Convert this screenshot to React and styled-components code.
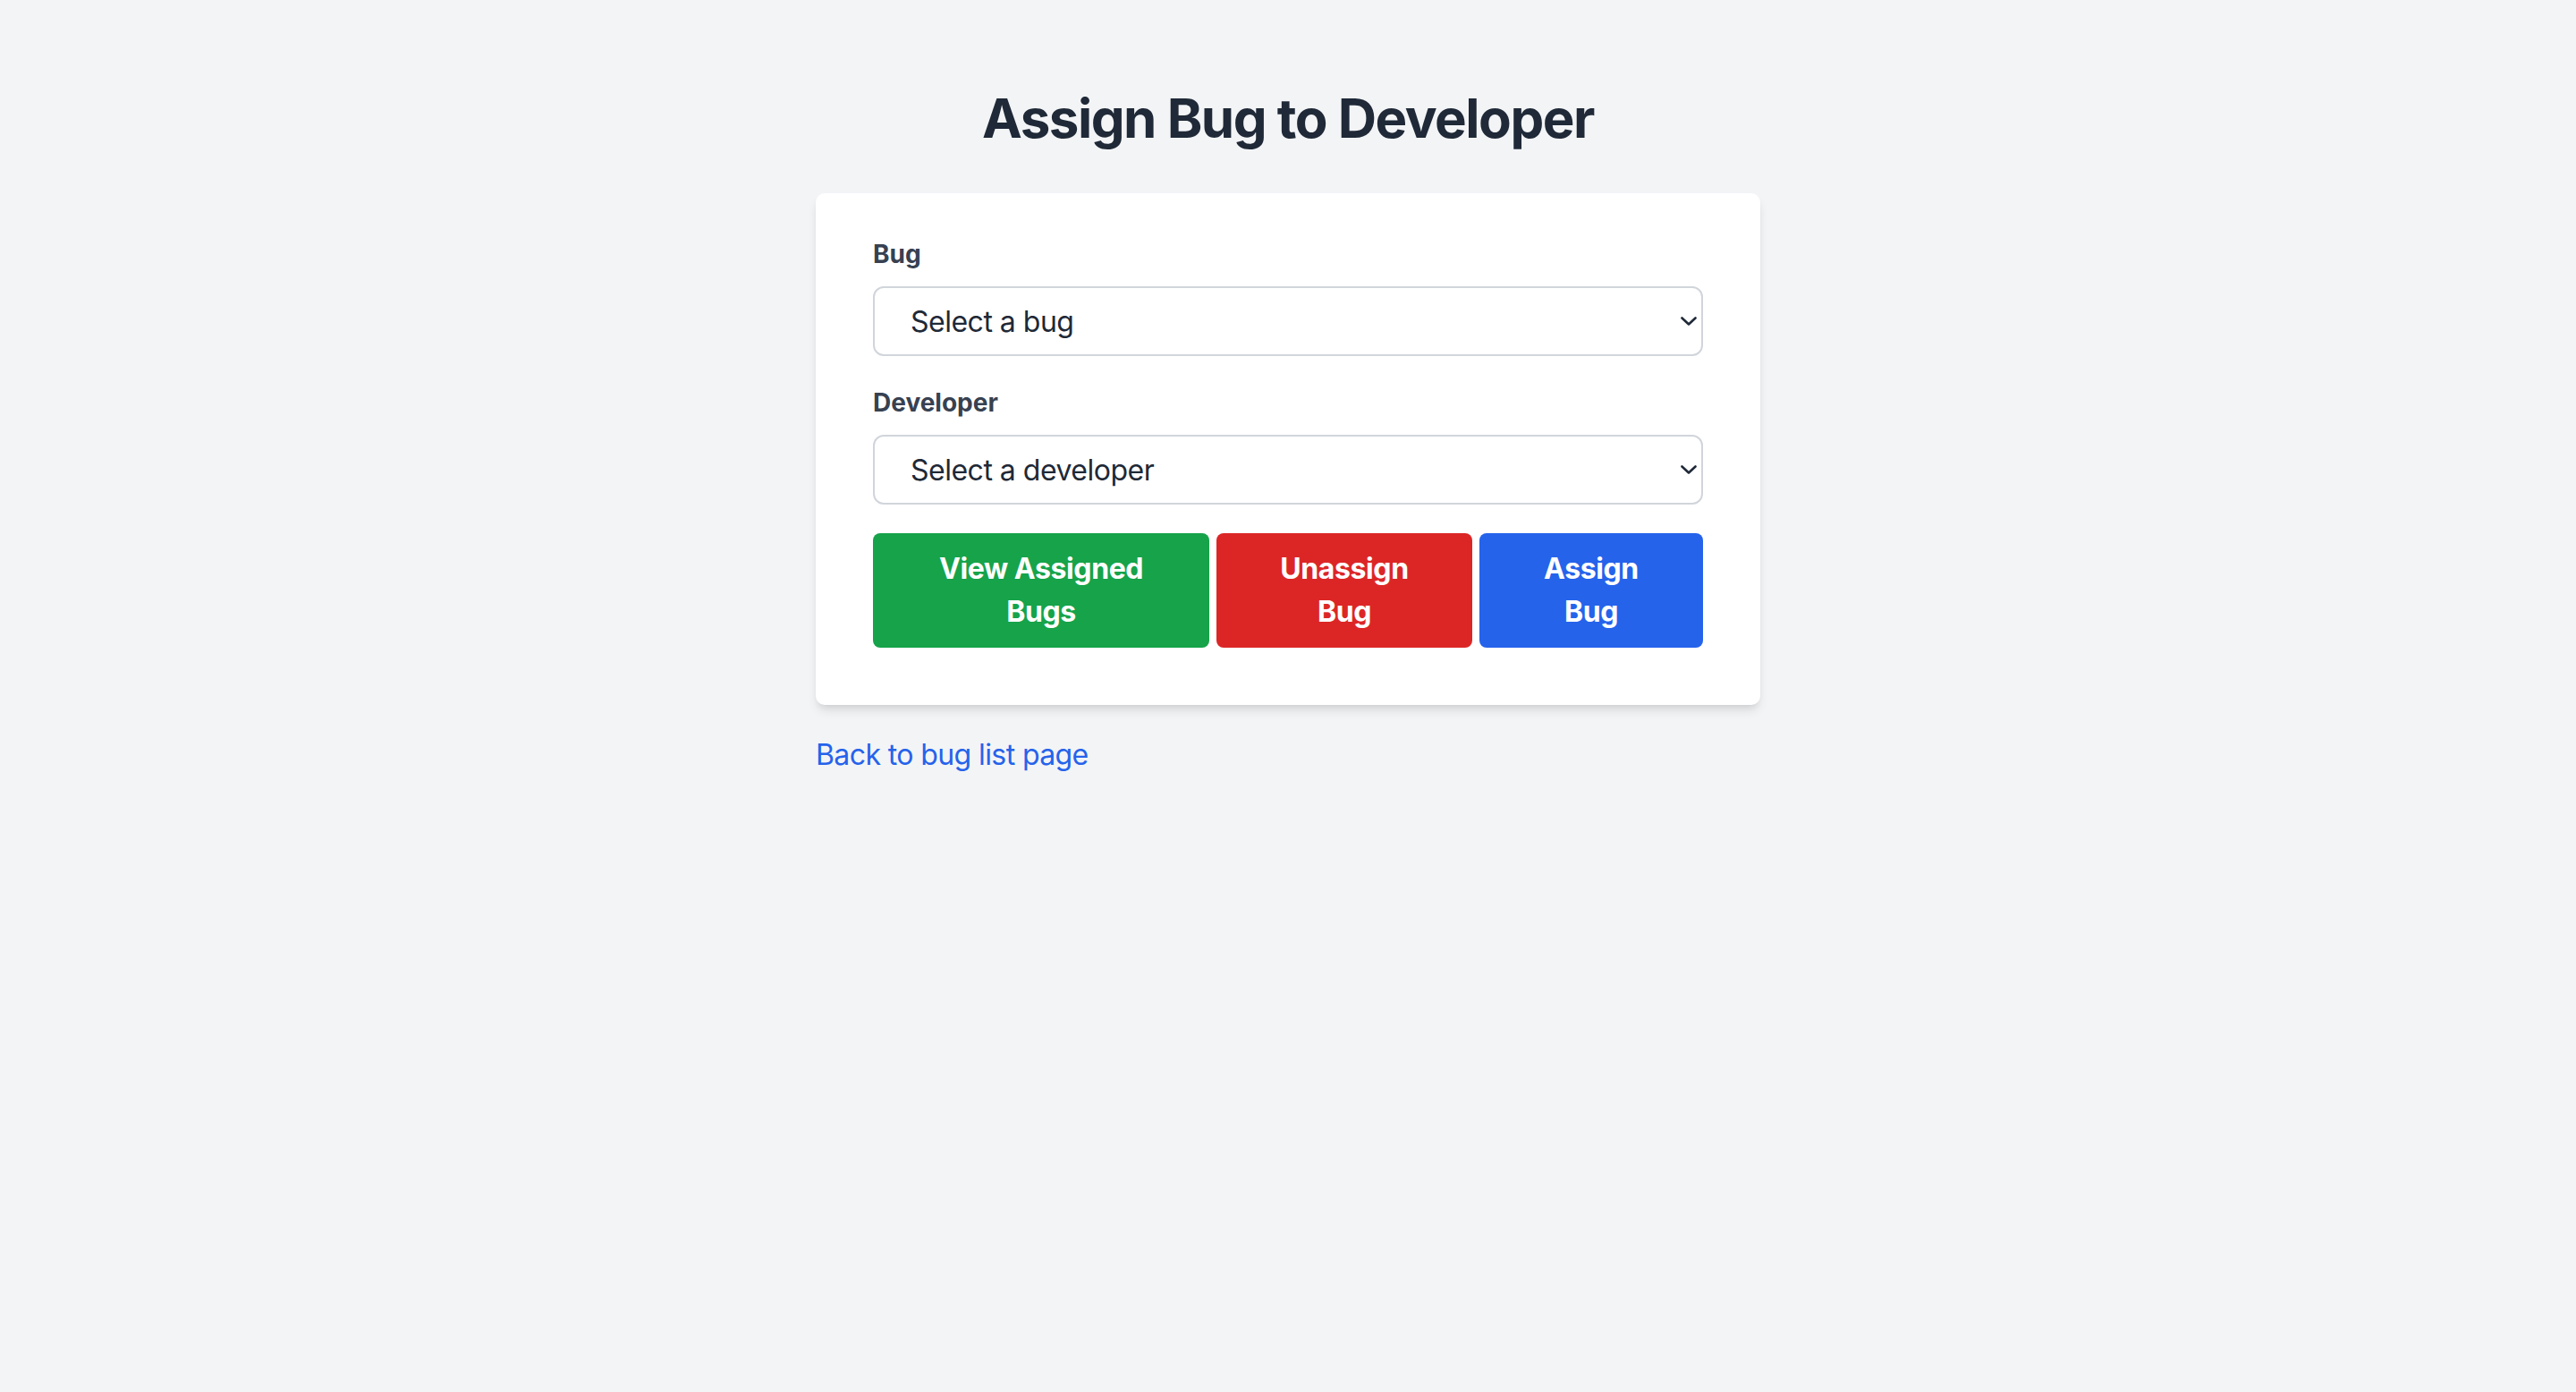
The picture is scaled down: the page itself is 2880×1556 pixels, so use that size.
import React from "react";
import styled, { createGlobalStyle } from "styled-components";

const GlobalStyle = createGlobalStyle`
  html, body {
    margin: 0;
    padding: 0;
    background: #f3f4f6;
  }
  * { box-sizing: border-box; }
  body {
    font-family: Inter, "Noto Sans", "Liberation Sans", sans-serif;
  }
`;

const Page = styled.div`
  min-height: 100vh;
  background: #f3f4f6;
  padding-top: 96px;
  display: flex;
  flex-direction: column;
  align-items: center;
`;

const Title = styled.h1`
  margin: 0 0 48px;
  font-size: 60px;
  line-height: 72px;
  font-weight: 700;
  letter-spacing: -1.5px;
  color: #1f2937;
  text-align: center;
`;

const Column = styled.div`
  width: 1056px;
  display: flex;
  flex-direction: column;
`;

const Card = styled.form`
  background: #ffffff;
  border-radius: 10px;
  box-shadow: 0 8px 12px -2px rgba(0, 0, 0, 0.1), 0 4px 8px -4px rgba(0, 0, 0, 0.1);
  padding: 48px 64px 64px;
  margin-bottom: 32px;
  display: flex;
  flex-direction: column;
`;

const Field = styled.div`
  display: flex;
  flex-direction: column;
  margin-bottom: 32px;
`;

const Label = styled.label`
  font-size: 28px;
  line-height: 40px;
  font-weight: 700;
  color: #374151;
  margin-bottom: 16px;
`;

const SelectWrap = styled.div`
  position: relative;
`;

const Select = styled.select`
  appearance: none;
  -webkit-appearance: none;
  width: 100%;
  height: 78px;
  border: 2px solid #d1d5db;
  border-radius: 12px;
  background: #ffffff;
  padding: 2px 40px 0 40px;
  font-family: Inter, "Noto Sans", "Liberation Sans", sans-serif;
  font-size: 32px;
  line-height: 40px;
  letter-spacing: -0.5px;
  color: #1f2937;
  outline: none;
`;

const Chevron = styled.svg`
  position: absolute;
  right: 7px;
  top: 50%;
  transform: translateY(-50%);
  width: 18px;
  height: 10px;
  pointer-events: none;
`;

const Actions = styled.div`
  display: flex;
  gap: 8px;
`;

const colors = {
  green: "#16a34a",
  red: "#dc2626",
  blue: "#2563eb",
};

const Button = styled.button`
  flex: 0 0 ${(p) => p.$width}px;
  border: none;
  border-radius: 8px;
  background: ${(p) => colors[p.$tone]};
  color: #ffffff;
  font-family: Inter, "Noto Sans", "Liberation Sans", sans-serif;
  font-size: 32px;
  line-height: 48px;
  font-weight: 700;
  letter-spacing: -0.4px;
  padding: 16px 48px;
  text-align: center;
  cursor: pointer;
`;

const BackLink = styled.a`
  font-size: 32px;
  line-height: 48px;
  letter-spacing: -0.6px;
  color: #2563eb;
  text-decoration: none;
  align-self: flex-start;
`;

function SelectField({ label, placeholder }) {
  return (
    <Field>
      <Label>{label}</Label>
      <SelectWrap>
        <Select defaultValue="">
          <option value="">{placeholder}</option>
        </Select>
        <Chevron viewBox="0 0 18 10" fill="none">
          <path
            d="M1.5 1.5 L9 8.5 L16.5 1.5"
            stroke="#1f2937"
            strokeWidth="2.6"
            strokeLinecap="round"
            strokeLinejoin="round"
          />
        </Chevron>
      </SelectWrap>
    </Field>
  );
}

export default function App() {
  return (
    <>
      <GlobalStyle />
      <Page>
        <Title>Assign Bug to Developer</Title>
        <Column>
          <Card onSubmit={(e) => e.preventDefault()}>
            <SelectField label="Bug" placeholder="Select a bug" />
            <SelectField label="Developer" placeholder="Select a developer" />
            <Actions>
              <Button type="button" $tone="green" $width={376}>
                View Assigned Bugs
              </Button>
              <Button type="button" $tone="red" $width={286}>
                Unassign Bug
              </Button>
              <Button type="button" $tone="blue" $width={250}>
                Assign Bug
              </Button>
            </Actions>
          </Card>
          <BackLink href="#">Back to bug list page</BackLink>
        </Column>
      </Page>
    </>
  );
}
